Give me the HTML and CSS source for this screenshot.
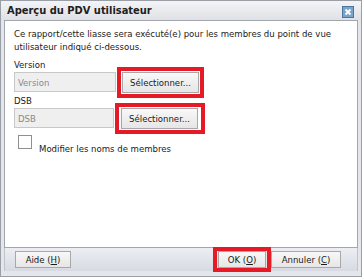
FILE: index.html
```html
<!DOCTYPE html>
<html lang="fr">
<head>
  <meta charset="UTF-8">
  <title>Aperçu du PDV utilisateur</title>
  <link rel="stylesheet" href="styles.css">
</head>
<body>
<div class="dialog">
  <div class="titlebar">
    <span class="title">Aperçu du PDV utilisateur</span>
    <span class="close">
      <svg width="12" height="12" viewBox="0 0 12 12">
        <rect x="0.5" y="0.5" width="11" height="11" fill="#7aa3c8" stroke="#4a76a0"/>
        <path d="M3.5 3.5 L8.5 8.5 M8.5 3.5 L3.5 8.5" stroke="#ffffff" stroke-width="1.8"/>
      </svg>
    </span>
  </div>
  <div class="content">
    <p class="intro">Ce rapport/cette liasse sera exécuté(e) pour les membres du point de vue utilisateur indiqué ci-dessous.</p>

    <div class="field">
      <label>Version</label>
      <div class="row">
        <input class="text" value="Version" disabled>
        <div class="mark"><button class="btn">Sélectionner...</button></div>
      </div>
    </div>

    <div class="field second">
      <label>DSB</label>
      <div class="row">
        <input class="text" value="DSB" disabled>
        <div class="mark"><button class="btn">Sélectionner...</button></div>
      </div>
    </div>

    <div class="check">
      <span class="box"></span>
      <span class="check-label">Modifier les noms de membres</span>
    </div>
  </div>
  <div class="footer">
    <button class="btn foot help">Aide (<u>H</u>)</button>
    <div class="spacer"></div>
    <div class="mark"><button class="btn foot ok">OK (<u>O</u>)</button></div>
    <button class="btn foot cancel">Annuler (<u>C</u>)</button>
  </div>
</div>
</body>
</html>
```

FILE: styles.css
```css
html, body {
  margin: 0;
  padding: 0;
  background: #ffffff;
}
body {
  font-family: "DejaVu Sans Condensed", "DejaVu Sans", Tahoma, sans-serif;
  font-size: 9.5px;
  color: #1a1a1a;
}
.dialog {
  width: 362px;
  height: 277px;
  box-sizing: border-box;
  border: 1px solid #9a9ea6;
  background: #e4e6ec;
  display: flex;
  flex-direction: column;
}
.titlebar {
  height: 19px;
  display: flex;
  align-items: center;
  justify-content: space-between;
  padding: 0 7px 0 6px;
  background: linear-gradient(#f3f4f6, #dfe1e6);
}
.title {
  font-weight: bold;
  font-size: 11px;
  color: #202020;
}
.close {
  display: flex;
  margin-top: 2px;
}
.content {
  flex: 1;
  margin: 0 3px;
  background: #ffffff;
  border: 1px solid #a2a6ad;
  padding: 6px 9px 0 9px;
}
.intro {
  margin: 0 0 6px 0;
  line-height: 13px;
}
.field label {
  display: block;
  line-height: 12px;
  height: 12px;
}
.row {
  display: flex;
  align-items: center;
  height: 26px;
  margin-top: -2px;
}
.text {
  width: 102px;
  height: 20px;
  box-sizing: border-box;
  border: 1px solid #c8c8c8;
  background: #efefef;
  color: #8a8a8a;
  font: inherit;
  padding: 0 3px;
  margin: 0 1px 0 0;
}
.second .text {
  width: 100px;
}
.mark {
  border: 4px solid #e51a26;
  padding: 1px;
  display: flex;
}
.second .mark {
  padding: 1px 3px 1px 2px;
}
.btn {
  font-family: "DejaVu Sans Condensed", "DejaVu Sans", Tahoma, sans-serif;
  font-size: 9.5px;
  color: #1a1a1a;
  background: linear-gradient(#f8f8f8, #e6e6e6);
  border: 1px solid #a8a8a8;
  height: 21px;
  padding: 0;
  margin: 0;
  white-space: nowrap;
}
.row .btn {
  width: 77px;
}
.check {
  display: flex;
  align-items: flex-start;
  margin-top: 4px;
}
.box {
  width: 12px;
  height: 12px;
  border: 1px solid #8e8f91;
  background: #ffffff;
  margin: 0 7px 0 4px;
}
.check-label {
  padding-top: 8px;
}
.footer {
  height: 23px;
  display: flex;
  align-items: center;
  padding: 0 16px 0 10px;
  background: linear-gradient(#eceef3, #d8dae3);
  margin: 0 3px 5px 3px;
  border-left: 1px solid #c0c3ca;
  border-right: 1px solid #c0c3ca;
}
.spacer {
  flex: 1;
}
.foot {
  height: 17px;
}
.help {
  width: 56px;
}
.ok {
  width: 48px;
}
.footer .mark {
  padding: 0 1px;
}
.cancel {
  width: 70px;
}
```
